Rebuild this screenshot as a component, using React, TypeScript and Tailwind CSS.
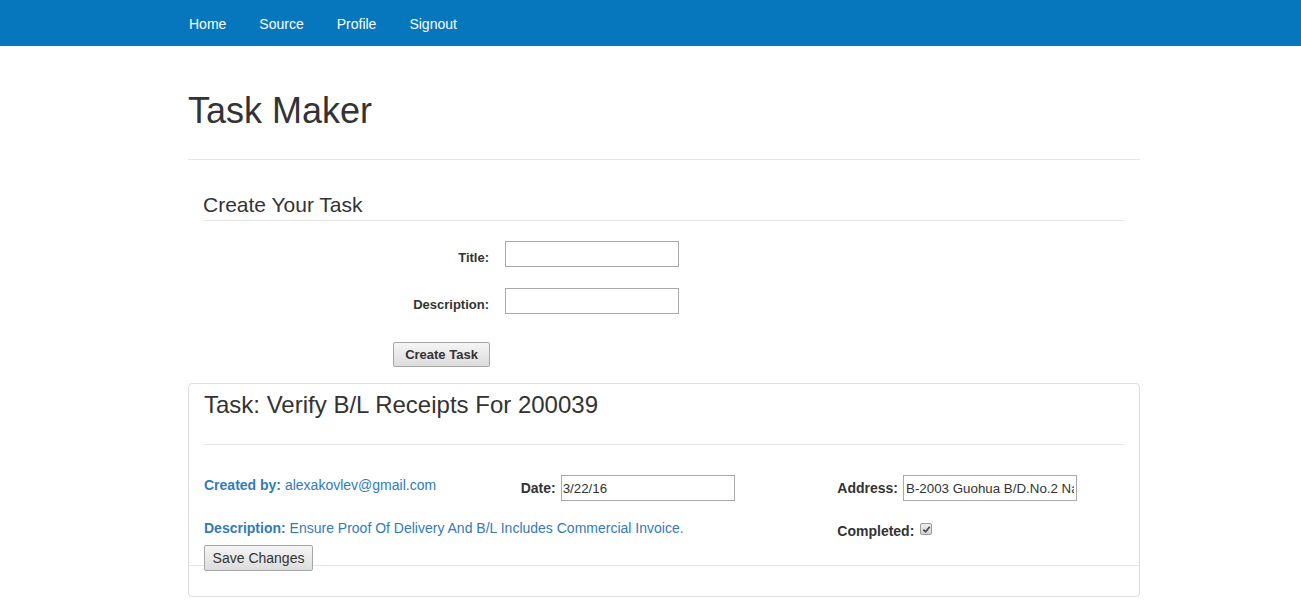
import { useState } from 'react';

const navLinks = ['Home', 'Source', 'Profile', 'Signout'];

function Checkmark() {
  return (
    <span className="relative -top-[2px] inline-flex h-[12px] w-[12px] items-center justify-center rounded-[2px] border border-[#9a9a9a] bg-gradient-to-b from-[#ededed] to-[#d4d4d4]">
      <svg viewBox="0 0 10 10" className="h-[9px] w-[9px]">
        <path d="M1.5 5.2 L4 7.6 L8.6 2" fill="none" stroke="#4a4a4a" strokeWidth="1.9" />
      </svg>
    </span>
  );
}

export default function App() {
  const [title, setTitle] = useState('');
  const [description, setDescription] = useState('');
  const [date, setDate] = useState('3/22/16');
  const [address, setAddress] = useState('B-2003 Guohua B/D.No.2 Nanshan Road');

  return (
    <div className="min-h-[601px] bg-white font-['Liberation_Sans',Arial,sans-serif] text-[14px] leading-[20px] text-[#333]">
      <nav className="h-[46px] bg-[#0677bc]">
        <ul className="ml-[189px] flex h-full items-center gap-[33px] pt-[2px]">
          {navLinks.map((link) => (
            <li key={link}>
              <a href="#" className="text-[14px] text-white">
                {link}
              </a>
            </li>
          ))}
        </ul>
      </nav>

      <div className="ml-[188px] w-[952px]">
        <div className="border-b border-[#e6e6e6] pb-[28px]">
          <h1 className="mt-[45px] text-[36px] leading-[40px]">Task Maker</h1>
        </div>

        <h3 className="mx-[15px] mt-[33px] border-b border-[#e6e6e6] pb-[3px] text-[21px] leading-[24px]">
          Create Your Task
        </h3>

        <form className="mt-[20px]" onSubmit={(e) => e.preventDefault()}>
          <div className="flex items-start">
            <label className="w-[301px] pt-[8px] text-right text-[13px] font-bold leading-[18px]">Title:</label>
            <input
              value={title}
              onChange={(e) => setTitle(e.target.value)}
              className="ml-[16px] h-[26px] w-[174px] border border-[#a9a9a9] px-[2px] text-[13.33px]"
            />
          </div>
          <div className="mt-[21px] flex items-start">
            <label className="w-[301px] pt-[8px] text-right text-[13px] font-bold leading-[18px]">Description:</label>
            <input
              value={description}
              onChange={(e) => setDescription(e.target.value)}
              className="ml-[16px] h-[26px] w-[174px] border border-[#a9a9a9] px-[2px] text-[13.33px]"
            />
          </div>
          <button
            type="submit"
            className="ml-[205px] mt-[28px] h-[25px] w-[97px] rounded-[2px] border border-[#a6a6a6] bg-gradient-to-b from-[#f5f5f5] to-[#dcdcdc] text-[13px] font-bold leading-[18px] text-[#333]"
          >
            Create Task
          </button>
        </form>

        <div className="mt-[16px] rounded-[4px] border border-[#dddddd] px-[15px] pt-[8px]">
          <h3 className="text-[24px] leading-[26px]">Task: Verify B/L Receipts For 200039</h3>
          <div className="mt-[26px] border-t border-[#e6e6e6]" />

          <div className="-mx-[15px] mt-[30px] grid grid-cols-3">
            <div className="px-[15px]">
              <p className="whitespace-nowrap text-[#337ab7]">
                <b>Created by:</b> alexakovlev@gmail.com
              </p>
              <p className="mt-[23px] whitespace-nowrap text-[#337ab7]">
                <b>Description:</b> Ensure Proof Of Delivery And B/L Includes Commercial Invoice.
              </p>
            </div>
            <div className="px-[15px]">
              <div className="flex items-center gap-[5px]">
                <b>Date:</b>
                <input
                  value={date}
                  onChange={(e) => setDate(e.target.value)}
                  className="h-[26px] w-[174px] border border-[#a9a9a9] px-[1px] text-[13.33px] text-[#333]"
                />
              </div>
            </div>
            <div className="px-[15px]">
              <div className="flex items-center gap-[5px]">
                <b>Address:</b>
                <input
                  value={address}
                  onChange={(e) => setAddress(e.target.value)}
                  className="h-[26px] w-[174px] border border-[#a9a9a9] px-[2px] text-[13.33px] text-[#333]"
                />
              </div>
              <div className="mt-[20px] flex items-center gap-[6px]">
                <b>Completed:</b>
                <Checkmark />
              </div>
            </div>
          </div>

          <button
            type="button"
            className="relative z-10 mt-[4px] h-[26px] w-[109px] rounded-[2px] border border-[#a6a6a6] bg-gradient-to-b from-[#f5f5f5] to-[#dcdcdc] text-[14px] leading-[18px] text-[#333]"
          >
            Save Changes
          </button>
          <div className="-mx-[15px] -mt-[6px] h-[31px] border-t border-[#e6e6e6]" />
        </div>
      </div>
    </div>
  );
}
